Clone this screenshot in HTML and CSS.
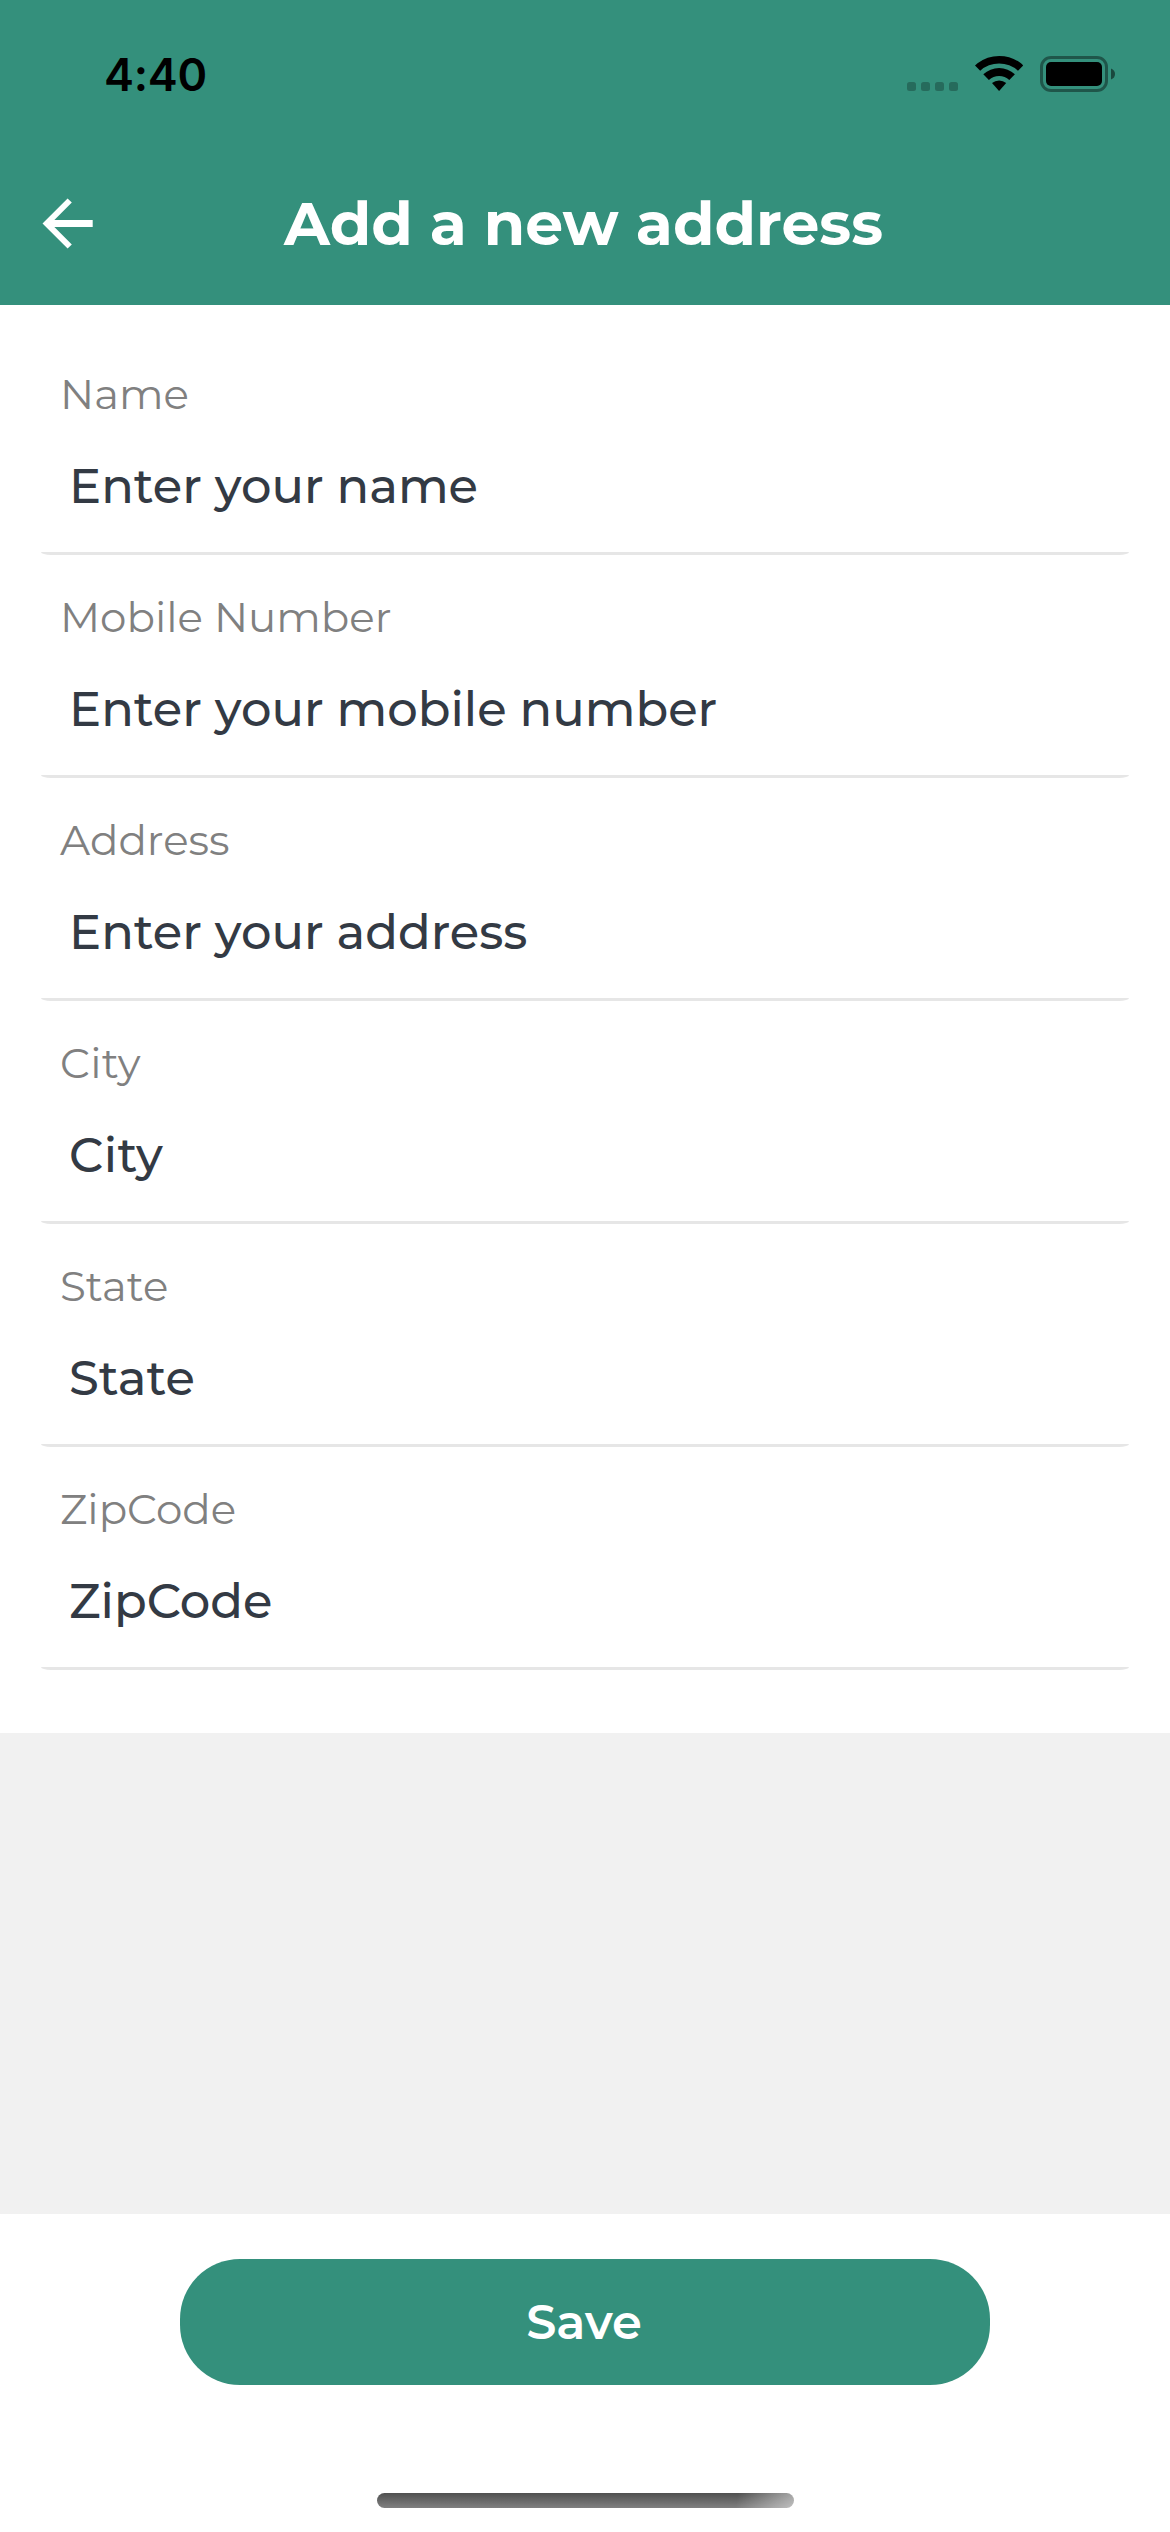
FILE: index.html
```
<!DOCTYPE html>
<html lang="en">
<head>
<meta charset="utf-8">
<title>Add a new address</title>
<link rel="stylesheet" href="styles.css">
</head>
<body>
<header class="header">
  <div class="status">
    <span class="time">4:40</span>
    <svg class="status-icons" width="212" height="40" viewBox="0 0 212 40">
      <g fill="#000" opacity=".25">
        <rect x="1" y="27" width="9" height="9" rx="2.5"/>
        <rect x="15" y="27" width="9" height="9" rx="2.5"/>
        <rect x="29" y="27" width="9" height="9" rx="2.5"/>
        <rect x="43" y="27" width="9" height="9" rx="2.5"/>
      </g>
      <path d="M69 10.500 Q70 9.500 71.500 8.300 A36 36 0 0 1 115 8.300 Q116.500 9.500 117.200 10.500 L112 15.800 A28 28 0 0 0 74.200 15.800 Z"/>
      <path d="M77.300 19.300 A23 23 0 0 1 108.900 19.300 L103.300 25 A15 15 0 0 0 82.900 25 Z"/>
      <path d="M86 28 A11 11 0 0 1 100.200 28 L93.100 36 Z"/>
      <rect x="135.500" y="2.500" width="65" height="33" rx="9.500" fill="none" stroke="#000" stroke-width="3" opacity=".4"/>
      <rect x="140" y="7" width="56" height="24" rx="5"/>
      <path d="M205 13.500 Q209 15 209 19 Q209 23 205 24.500 Z" opacity=".5"/>
    </svg>
  </div>
  <div class="bar">
    <svg class="back" width="52" height="53" viewBox="0 0 52 53" fill="none" stroke="#fff">
      <path stroke-width="6" d="M27.700 3.500 L4.750 26.500 L27.700 49.500"/>
      <path stroke-width="7" d="M6 26.500 H50.700"/>
    </svg>
    <h1 class="title">Add a new address</h1>
  </div>
</header>
<main class="form">
  <div class="field"><span class="label">Name</span><span class="value">Enter your name</span></div>
  <div class="field"><span class="label">Mobile Number</span><span class="value">Enter your mobile number</span></div>
  <div class="field"><span class="label">Address</span><span class="value">Enter your address</span></div>
  <div class="field city"><span class="label">City</span><span class="value">City</span></div>
  <div class="field"><span class="label">State</span><span class="value">State</span></div>
  <div class="field"><span class="label">ZipCode</span><span class="value">ZipCode</span></div>
</main>
<div class="spacer"></div>
<footer class="footer">
  <button class="save" type="button">Save</button>
  <div class="home"></div>
</footer>
</body>
</html>
```
FILE: styles.css
```
* { box-sizing: border-box; }
body {
  margin: 0;
  width: 1170px;
  height: 2532px;
  display: flex;
  flex-direction: column;
  background: #fff;
  font-family: Montserrat, Inter, sans-serif;
}
.header { height: 305px; background: #34907c; }
.status {
  height: 141px;
  padding: 0 52px 0 104px;
  display: flex;
  justify-content: space-between;
}
.time { margin-top: 47px; font: 600 45px/55px Inter, sans-serif; letter-spacing: -0.3px; color: #000; }
.status-icons { margin-top: 55px; }
.bar {
  height: 164px;
  padding-top: 1px;
  display: grid;
  grid-template-columns: 139px 1fr 142px;
  align-items: center;
}
.back { margin-left: 42px; }
.title {
  margin: 0;
  text-align: center;
  color: #fff;
  font-size: 60px;
  line-height: 73px;
  font-weight: 700;
  white-space: nowrap;
}
.form { height: 1428px; padding: 27px 41px 0; }
.field {
  height: 223px;
  display: flex;
  flex-direction: column;
}
.field::after {
  content: "";
  height: 3px;
  margin-top: auto;
  border-radius: 0 0 10px 10px / 0 0 3px 3px;
  background: #e6e6e6;
}
.label { margin: 36px 0 0 19px; font-size: 42px; line-height: 52px; color: #808080; }
.value { margin: 37px 0 0 28px; font-size: 48px; line-height: 58px; font-weight: 500; color: #333a44; }
.city { letter-spacing: 0.5px; }
.spacer { height: 481px; background: #f1f1f1; }
.footer {
  flex: 1;
  padding-top: 45px;
  display: flex;
  flex-direction: column;
  align-items: center;
}
.save {
  width: 810px;
  height: 126px;
  padding: 0 2px 0 0;
  border: 0;
  border-radius: 60px;
  background: #34907c;
  color: #fff;
  font: 600 48px/58px Montserrat, Inter, sans-serif;
}
.home {
  width: 417px;
  height: 15px;
  margin: 108px 0 0 1px;
  border-radius: 7.5px;
  background: linear-gradient(100deg, rgba(255,255,255,0) 86%, rgba(255,255,255,.5) 100%), linear-gradient(#505050, #808080);
}
```
